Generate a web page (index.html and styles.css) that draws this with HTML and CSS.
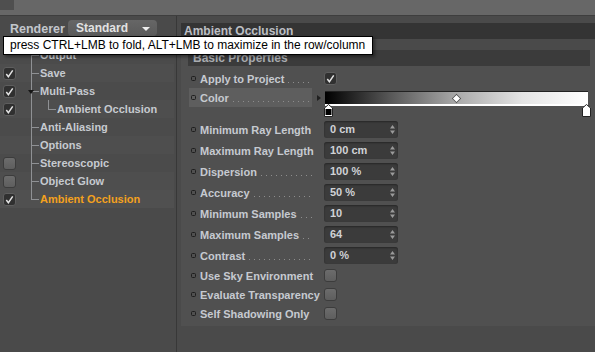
FILE: index.html
```html
<!DOCTYPE html>
<html lang="en">
<head>
  <meta charset="UTF-8">
  <title>Render Settings</title>
  <link rel="stylesheet" href="styles.css">
</head>
<body>
<div class="app">
  <div class="topbar"><span class="grip"></span></div>

  <div class="main">
    <!-- 왼쪽: 렌더 설정 트리 -->
    <aside class="tree-panel">
      <div class="renderer-row">
        <span class="renderer-label">Renderer</span>
        <button class="dropdown">Standard<span class="caret"></span></button>
      </div>
      <ul class="tree">
        <li class="tree-row"><span class="check-cell"></span><span class="branch"></span><span class="tree-label">Output</span></li>
        <li class="tree-row alt"><span class="check-cell"><span class="box on"><svg viewBox="0 0 12 12"><path d="M2.5 6.5 L4.8 9.5 L9.5 2.5"/></svg></span></span><span class="branch"></span><span class="tree-label">Save</span></li>
        <li class="tree-row"><span class="check-cell"><span class="box on"><svg viewBox="0 0 12 12"><path d="M2.5 6.5 L4.8 9.5 L9.5 2.5"/></svg></span></span><span class="branch"><span class="twisty"></span></span><span class="tree-label">Multi-Pass</span></li>
        <li class="tree-row alt"><span class="check-cell"><span class="box on"><svg viewBox="0 0 12 12"><path d="M2.5 6.5 L4.8 9.5 L9.5 2.5"/></svg></span></span><span class="branch pass"></span><span class="sub-branch"></span><span class="tree-label">Ambient Occlusion</span></li>
        <li class="tree-row"><span class="check-cell"></span><span class="branch"></span><span class="tree-label">Anti-Aliasing</span></li>
        <li class="tree-row alt"><span class="check-cell"></span><span class="branch"></span><span class="tree-label">Options</span></li>
        <li class="tree-row"><span class="check-cell"><span class="box"></span></span><span class="branch"></span><span class="tree-label">Stereoscopic</span></li>
        <li class="tree-row alt"><span class="check-cell"><span class="box"></span></span><span class="branch"></span><span class="tree-label">Object Glow</span></li>
        <li class="tree-row selected"><span class="check-cell"><span class="box on"><svg viewBox="0 0 12 12"><path d="M2.5 6.5 L4.8 9.5 L9.5 2.5"/></svg></span></span><span class="branch last"></span><span class="tree-label">Ambient Occlusion</span></li>
      </ul>
    </aside>

    <span class="divider"></span>

    <!-- 오른쪽: 속성 -->
    <section class="attr-panel">
      <div class="attr-head">Ambient Occlusion</div>
      <div class="group">
        <div class="group-title">Basic Properties</div>

        <div class="prop-row">
          <div class="prop-label"><span class="bullet"></span>Apply to Project<span class="leader"></span></div>
          <span class="box on"><svg viewBox="0 0 12 12"><path d="M2.5 6.5 L4.8 9.5 L9.5 2.5"/></svg></span>
        </div>

        <div class="prop-row color-row">
          <div class="prop-label hilite"><span class="bullet"></span>Color<span class="leader"></span></div>
          <span class="expand"></span>
          <div class="gradient">
            <span class="knot"></span>
            <svg class="stop stop-left" viewBox="0 0 9 13"><path d="M4.5 0.5 L8.5 4 L8.5 12.5 L0.5 12.5 L0.5 4 Z" fill="#fff" stroke="#222"/><rect x="2" y="5.5" width="5" height="5" fill="#000" stroke="#000"/></svg>
            <svg class="stop stop-right" viewBox="0 0 9 13"><path d="M4.5 0.5 L8.5 4 L8.5 12.5 L0.5 12.5 L0.5 4 Z" fill="#fff" stroke="#222"/></svg>
          </div>
        </div>

        <div class="prop-row field-row">
          <div class="prop-label"><span class="bullet"></span>Minimum Ray Length<span class="leader"></span></div>
          <div class="field">0 cm<svg class="spin" viewBox="0 0 5 9"><path d="M2.5 0 L5 3.5 L0 3.5 Z M2.5 9 L5 5.5 L0 5.5 Z"/></svg></div>
        </div>
        <div class="prop-row field-row">
          <div class="prop-label"><span class="bullet"></span>Maximum Ray Length<span class="leader"></span></div>
          <div class="field">100 cm<svg class="spin" viewBox="0 0 5 9"><path d="M2.5 0 L5 3.5 L0 3.5 Z M2.5 9 L5 5.5 L0 5.5 Z"/></svg></div>
        </div>
        <div class="prop-row field-row">
          <div class="prop-label"><span class="bullet"></span>Dispersion<span class="leader"></span></div>
          <div class="field">100 %<svg class="spin" viewBox="0 0 5 9"><path d="M2.5 0 L5 3.5 L0 3.5 Z M2.5 9 L5 5.5 L0 5.5 Z"/></svg></div>
        </div>
        <div class="prop-row field-row">
          <div class="prop-label"><span class="bullet"></span>Accuracy<span class="leader"></span></div>
          <div class="field">50 %<svg class="spin" viewBox="0 0 5 9"><path d="M2.5 0 L5 3.5 L0 3.5 Z M2.5 9 L5 5.5 L0 5.5 Z"/></svg></div>
        </div>
        <div class="prop-row field-row">
          <div class="prop-label"><span class="bullet"></span>Minimum Samples<span class="leader"></span></div>
          <div class="field">10<svg class="spin" viewBox="0 0 5 9"><path d="M2.5 0 L5 3.5 L0 3.5 Z M2.5 9 L5 5.5 L0 5.5 Z"/></svg></div>
        </div>
        <div class="prop-row field-row">
          <div class="prop-label"><span class="bullet"></span>Maximum Samples<span class="leader"></span></div>
          <div class="field">64<svg class="spin" viewBox="0 0 5 9"><path d="M2.5 0 L5 3.5 L0 3.5 Z M2.5 9 L5 5.5 L0 5.5 Z"/></svg></div>
        </div>
        <div class="prop-row field-row">
          <div class="prop-label"><span class="bullet"></span>Contrast<span class="leader"></span></div>
          <div class="field">0 %<svg class="spin" viewBox="0 0 5 9"><path d="M2.5 0 L5 3.5 L0 3.5 Z M2.5 9 L5 5.5 L0 5.5 Z"/></svg></div>
        </div>

        <div class="prop-row">
          <div class="prop-label"><span class="bullet"></span>Use Sky Environment<span class="leader"></span></div>
          <span class="box"></span>
        </div>
        <div class="prop-row">
          <div class="prop-label"><span class="bullet"></span>Evaluate Transparency<span class="leader"></span></div>
          <span class="box"></span>
        </div>
        <div class="prop-row">
          <div class="prop-label"><span class="bullet"></span>Self Shadowing Only<span class="leader"></span></div>
          <span class="box"></span>
        </div>
      </div>
    </section>
  </div>

  <div class="tooltip">press CTRL+LMB to fold, ALT+LMB to maximize in the row/column</div>
</div>
</body>
</html>
```

FILE: styles.css
```css
*{
  box-sizing: border-box;
}
body{
  margin: 0;
  background-color: #4a4a4a;
  font-family: "Liberation Sans", Arial, sans-serif;
  font-size: 11px;
  color: #c6cad0;
}
.app{
  position: relative;
  width: 595px;
  height: 352px;
  overflow: hidden;
}

/* 상단 바 */
.topbar{
  height: 16px;
  background-color: #676767;
  border-bottom: 1px solid #3e3e3e;
}
.grip{
  display: block;
  width: 14px;
  height: 10px;
  background-image: radial-gradient(circle, #4e4e4e 0.7px, transparent 0.9px);
  background-size: 2px 2px;
}

.main{
  display: flex;
  height: 336px;
}

/* 트리 패널 */
.tree-panel{
  width: 176px;
  flex: none;
}
.renderer-row{
  display: flex;
  align-items: flex-start;
  height: 30px;
  padding: 4px 0 0 10px;
}
.renderer-label{
  font-weight: bold;
  font-size: 12.5px;
  line-height: 18px;
  color: #c2c6cc;
  width: 58px;
}
.dropdown{
  position: relative;
  width: 89px;
  height: 16px;
  border: none;
  border-radius: 4px;
  background: linear-gradient(#666, #5a5a5a);
  color: #e2e2e2;
  font-family: inherit;
  font-size: 12px;
  font-weight: bold;
  text-align: left;
  padding: 0 0 0 8px;
  line-height: 16px;
}
.caret{
  position: absolute;
  right: 7px;
  top: 7px;
  border-left: 4px solid transparent;
  border-right: 4px solid transparent;
  border-top: 4px solid #eee;
}

.tree{
  list-style: none;
  margin: 0;
  padding: 0;
  width: 174px;
}
.tree-row{
  display: flex;
  align-items: center;
  height: 18px;
  background-color: #4b4b4b;
}
.tree-row.alt{
  background-color: #4e4e4e;
}
.tree-row.selected{
  background-color: #505050;
}
.tree-label{
  font-weight: bold;
  white-space: nowrap;
}
.selected .tree-label{
  color: #f4a11e;
}
.check-cell{
  width: 20px;
  flex: none;
  padding-left: 3px;
  display: flex;
}
.branch,
.sub-branch{
  position: relative;
  align-self: stretch;
  flex: none;
}
.branch{
  width: 20px;
}
.sub-branch{
  width: 17px;
}
.branch::before{
  content: "";
  position: absolute;
  left: 11px;
  top: 0;
  bottom: 0;
  border-left: 1px solid #8f9194;
}
.branch::after{
  content: "";
  position: absolute;
  left: 12px;
  right: 1px;
  top: 9px;
  border-top: 1px solid #8f9194;
}
.branch.last::before{
  bottom: 8px;
}
.branch.pass::after{
  display: none;
}
.sub-branch::before{
  content: "";
  position: absolute;
  left: 8px;
  top: 0;
  height: 10px;
  border-left: 1px solid #8f9194;
}
.sub-branch::after{
  content: "";
  position: absolute;
  left: 9px;
  right: 1px;
  top: 9px;
  border-top: 1px solid #8f9194;
}
.twisty{
  position: absolute;
  left: 8px;
  top: 8px;
  border-left: 3.5px solid transparent;
  border-right: 3.5px solid transparent;
  border-top: 4px solid #151515;
  z-index: 1;
}

/* 체크박스 */
.box{
  display: inline-block;
  width: 13px;
  height: 13px;
  border-radius: 3px;
  border: 1px solid #3c3c3c;
  background: linear-gradient(#6c6c6c, #5e5e5e);
  flex: none;
}
.box.on{
  background: #303030;
  border-color: #5e5e5e;
}
.box svg{
  display: block;
  width: 11px;
  height: 11px;
}
.box path{
  fill: none;
  stroke: #e4e4e4;
  stroke-width: 1.6;
}

.divider{
  width: 1px;
  flex: none;
  background-color: #383838;
  margin-right: 4px;
}

/* 속성 패널 */
.attr-panel{
  flex: 1;
  padding-top: 7px;
  background-color: #4a4a4a;
}
.attr-head{
  height: 16px;
  background-color: #343434;
  padding-left: 3px;
  font-size: 12px;
  font-weight: bold;
  line-height: 16px;
  color: #bcbfc4;
}
.group{
  margin-top: 11px;
  height: 276px;
  background-color: #505050;
  padding: 0 5px 0 7px;
}
.group-title{
  height: 16px;
  background-color: #3b3b3b;
  padding-left: 5px;
  font-size: 12px;
  font-weight: bold;
  line-height: 16px;
  color: #a9acb1;
  margin-bottom: 3px;
}
.prop-row{
  display: flex;
  align-items: center;
  height: 19px;
}
.field-row{
  height: 21px;
}
.prop-label{
  display: flex;
  align-items: center;
  width: 123px;
  height: 19px;
  margin-left: 1px;
  margin-right: 12px;
  padding-left: 2px;
  font-size: 11px;
  font-weight: bold;
  white-space: nowrap;
  flex: none;
}
.prop-label.hilite{
  background-color: #5e5e5e;
}
.bullet{
  width: 5px;
  height: 5px;
  border: 1px solid #1e1e1e;
  border-radius: 1.5px;
  margin-right: 4px;
  flex: none;
}
.leader{
  flex: 1;
  align-self: flex-end;
  height: 1px;
  margin: 0 0 5px 4px;
  background-image: linear-gradient(to right, #8d8d8d 1px, transparent 1px);
  background-size: 5px 1px;
}

/* 색 그라디언트 */
.color-row{
  margin-bottom: 12px;
}
.expand{
  width: 0;
  height: 0;
  border-top: 3.5px solid transparent;
  border-bottom: 3.5px solid transparent;
  border-left: 4px solid #202020;
  margin: 0 4px 0 -7px;
}
.gradient{
  position: relative;
  width: 263px;
  height: 15px;
  margin-top: 1px;
  border-top: 1px solid #222;
  border-bottom: 2px solid #fff;
  background: linear-gradient(to right, #000, #585858 25%, #a9a9a9 50%, #e4e4e4 75%, #fff);
}
.knot{
  position: absolute;
  left: 128px;
  top: 3px;
  width: 7px;
  height: 7px;
  background-color: #fff;
  border: 1px solid #555;
  transform: rotate(45deg);
}
.stop{
  position: absolute;
  top: 12px;
  width: 9px;
  height: 13px;
}
.stop-left{
  left: -1px;
}
.stop-right{
  right: -3px;
}

/* 숫자 필드 */
.field{
  position: relative;
  width: 74px;
  height: 17px;
  border-radius: 3px;
  background-color: #3b3b3b;
  box-shadow: inset 0 1px 2px #262626;
  padding-left: 6px;
  line-height: 17px;
  font-weight: bold;
  color: #d0d2d6;
}
.spin{
  position: absolute;
  right: 3px;
  top: 4px;
  width: 5px;
  height: 9px;
  fill: #9a9a9a;
}

/* 툴팁 */
.tooltip{
  position: absolute;
  left: 3px;
  top: 36px;
  width: 370px;
  height: 19px;
  border: 1px solid #000;
  background-color: #fff;
  box-shadow: 2px 2px 3px rgba(0, 0, 0, 0.4);
  padding-left: 6px;
  font-size: 12px;
  line-height: 17px;
  color: #000;
  white-space: nowrap;
}
```
